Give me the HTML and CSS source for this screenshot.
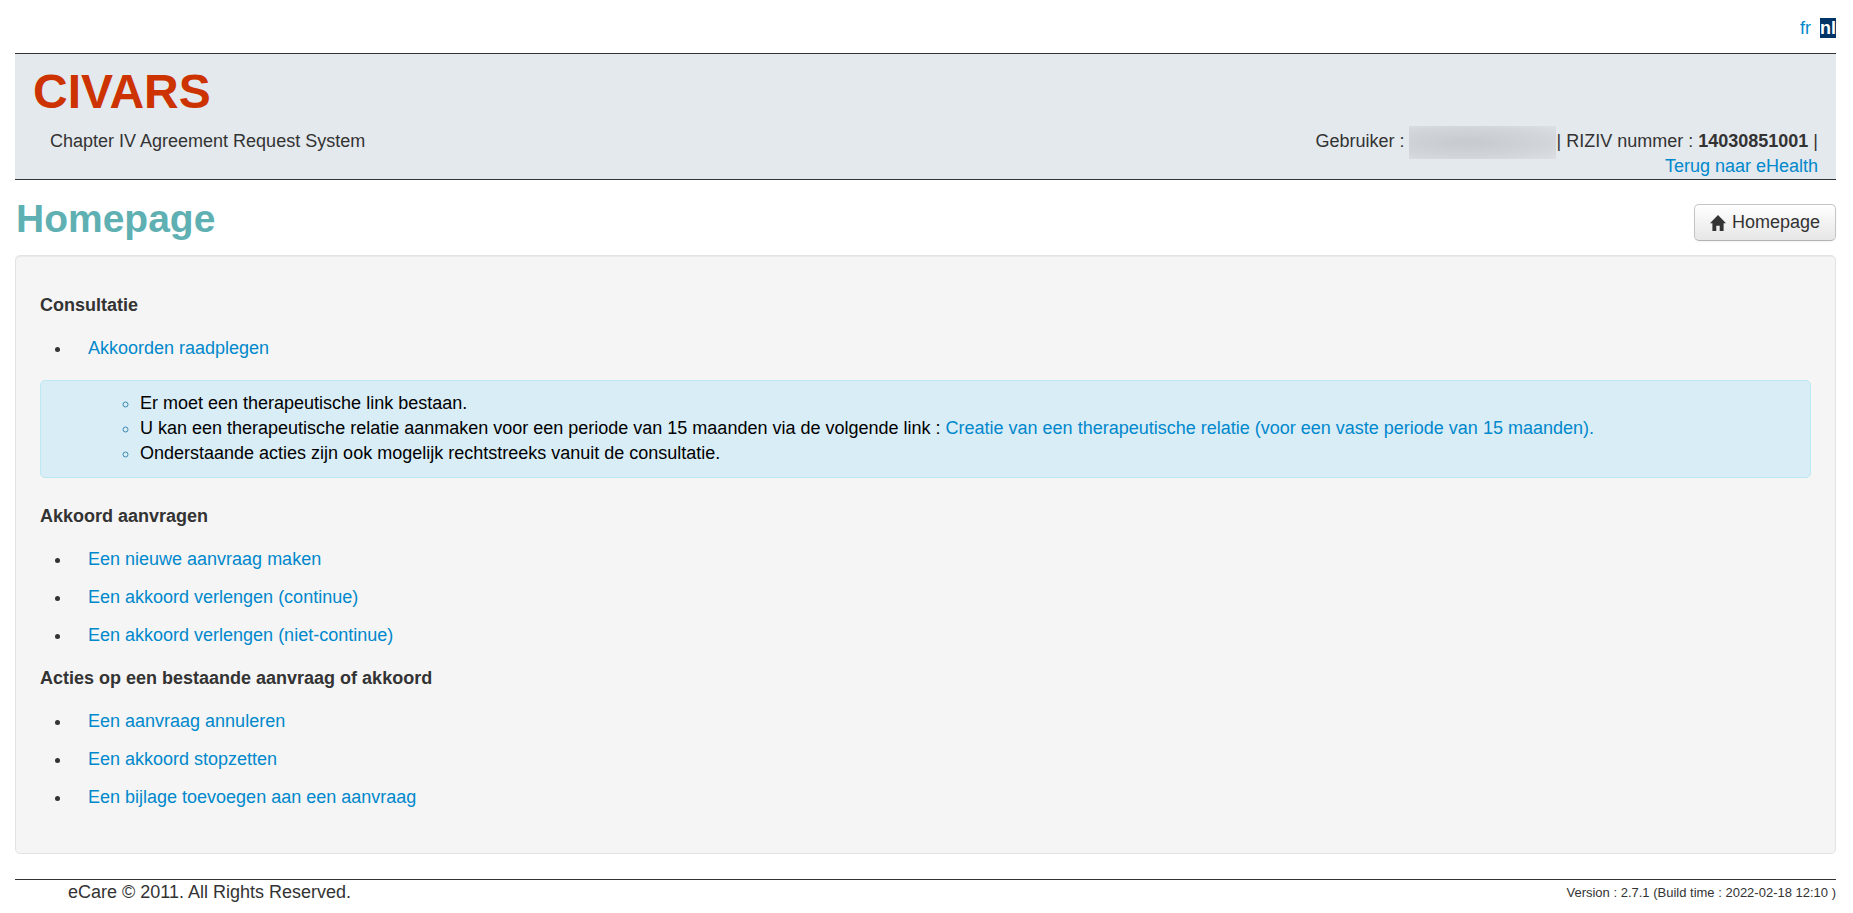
FILE: index.html
```html
<!DOCTYPE html>
<html lang="nl">
<head>
<meta charset="utf-8">
<title>CIVARS - Homepage</title>
<meta name="viewport" content="width=device-width, initial-scale=1">
<link rel="stylesheet" href="styles.css">
</head>
<body>
<nav class="languages" aria-label="Taal">
  <a href="#fr">fr</a>
  <strong class="language-current">nl</strong>
</nav>

<header class="banner">
  <div class="brand">
    <div class="brand-name">CIVARS</div>
    <div class="brand-tagline">Chapter IV Agreement Request System</div>
  </div>
  <div class="user">
    <div class="user-line">Gebruiker : <span class="user-name"></span>| RIZIV nummer : <strong>14030851001</strong> |</div>
    <a href="#ehealth">Terug naar eHealth</a>
  </div>
</header>

<div class="title-bar">
  <h1 class="page-title">Homepage</h1>
  <button class="button" type="button">
    <svg class="button-icon" viewBox="0 0 16 16" aria-hidden="true"><path d="M8 0 16 8.300H13.600V16H9.700V10.700H6.300V16H2.400V8.300H0Z" fill="#333"/></svg>
    Homepage
  </button>
</div>

<main class="well">
  <section>
    <h2 class="section-title">Consultatie</h2>
    <ul class="actions">
      <li><a href="#raadplegen">Akkoorden raadplegen</a></li>
    </ul>
    <div class="notice">
      <ul class="notice-list">
        <li><span>Er moet een therapeutische link bestaan.</span></li>
        <li><span>U kan een therapeutische relatie aanmaken voor een periode van 15 maanden via de volgende link : <a href="#relatie">Creatie van een therapeutische relatie (voor een vaste periode van 15 maanden).</a></span></li>
        <li><span>Onderstaande acties zijn ook mogelijk rechtstreeks vanuit de consultatie.</span></li>
      </ul>
    </div>
  </section>
  <section>
    <h2 class="section-title">Akkoord aanvragen</h2>
    <ul class="actions">
      <li><a href="#nieuw">Een nieuwe aanvraag maken</a></li>
      <li><a href="#continue">Een akkoord verlengen (continue)</a></li>
      <li><a href="#niet-continue">Een akkoord verlengen (niet-continue)</a></li>
    </ul>
  </section>
  <section>
    <h2 class="section-title">Acties op een bestaande aanvraag of akkoord</h2>
    <ul class="actions">
      <li><a href="#annuleren">Een aanvraag annuleren</a></li>
      <li><a href="#stopzetten">Een akkoord stopzetten</a></li>
      <li><a href="#bijlage">Een bijlage toevoegen aan een aanvraag</a></li>
    </ul>
  </section>
</main>

<footer class="footer">
  <span>eCare © 2011. All Rights Reserved.</span>
  <small class="version">Version : 2.7.1 (Build time : 2022-02-18 12:10 )</small>
</footer>
</body>
</html>
```
FILE: styles.css
```css
* {
  box-sizing: border-box;
}

body {
  margin: 0;
  padding: 16px 17px 8px 15px;
  background: #fff;
  color: #333;
  font: 18px/25px "Liberation Sans", Arial, sans-serif;
}

a {
  color: #08c;
  text-decoration: none;
}

a:hover {
  text-decoration: underline;
}

.languages {
  display: flex;
  justify-content: flex-end;
  align-items: baseline;
  gap: 9px;
  padding-bottom: 12px;
}

.language-current {
  background: #036;
  color: #fff;
  line-height: 20px;
}

.banner {
  display: flex;
  justify-content: space-between;
  align-items: flex-end;
  min-height: 127px;
  padding: 10px 18px 0;
  background: #e4e9ed;
  border-top: 1px solid #333;
  border-bottom: 1px solid #333;
}

.brand {
  padding-bottom: 25px;
}

.brand-name {
  color: #c30;
  font-size: 48px;
  font-weight: bold;
  line-height: 50px;
}

.brand-tagline {
  padding: 12px 0 0 17px;
}

.user {
  text-align: right;
}

.user-name {
  display: inline-block;
  width: 147px;
  height: 33px;
  margin: -6px 0;
  vertical-align: middle;
  background: radial-gradient(ellipse at 40% 50%, #c8cbcf 10%, #d1d5d9 60%, #dce0e4 100%);
}

.title-bar {
  display: flex;
  justify-content: space-between;
  align-items: center;
  padding: 15px 0 13px;
}

.page-title {
  margin: 0;
  padding-left: 1px;
  color: #5fb0b2;
  font-size: 39px;
  line-height: 47px;
}

.button {
  display: flex;
  align-items: center;
  gap: 6px;
  margin-top: 8px;
  padding: 5px 15px;
  color: #333;
  font: inherit;
  background: linear-gradient(#fff, #e6e6e6);
  border: 1px solid #c5c5c5;
  border-bottom-color: #b3b3b3;
  border-radius: 5px;
  box-shadow: inset 0 1px 0 #fff, 0 1px 2px rgba(0, 0, 0, 0.05);
  cursor: pointer;
}

.button-icon {
  width: 16px;
  height: 16px;
}

.well {
  padding: 24px 24px 25px;
  background: #f5f5f5;
  border: 1px solid #e3e3e3;
  border-radius: 5px;
  box-shadow: inset 0 1px 1px rgba(0, 0, 0, 0.05);
}

.section-title {
  margin: 13px 0 12px;
  font-size: 18px;
  line-height: 25px;
}

.actions {
  display: grid;
  gap: 13px;
  margin: 18px 0;
  padding-left: 32px;
}

.actions li {
  padding-left: 16px;
}

.notice {
  margin: 19px 0 26px;
  padding: 10px 44px 11px 99px;
  background: #d9edf7;
  border: 1px solid #bce8f1;
  border-radius: 5px;
  color: #3a87ad;
}

.notice-list {
  margin: 0;
  padding: 0;
  list-style: circle;
}

.notice-list span {
  color: #000;
}

.footer {
  display: flex;
  justify-content: space-between;
  margin-top: 25px;
  padding-left: 53px;
  border-top: 1px solid #333;
}

.version {
  font-size: 13px;
}
```
